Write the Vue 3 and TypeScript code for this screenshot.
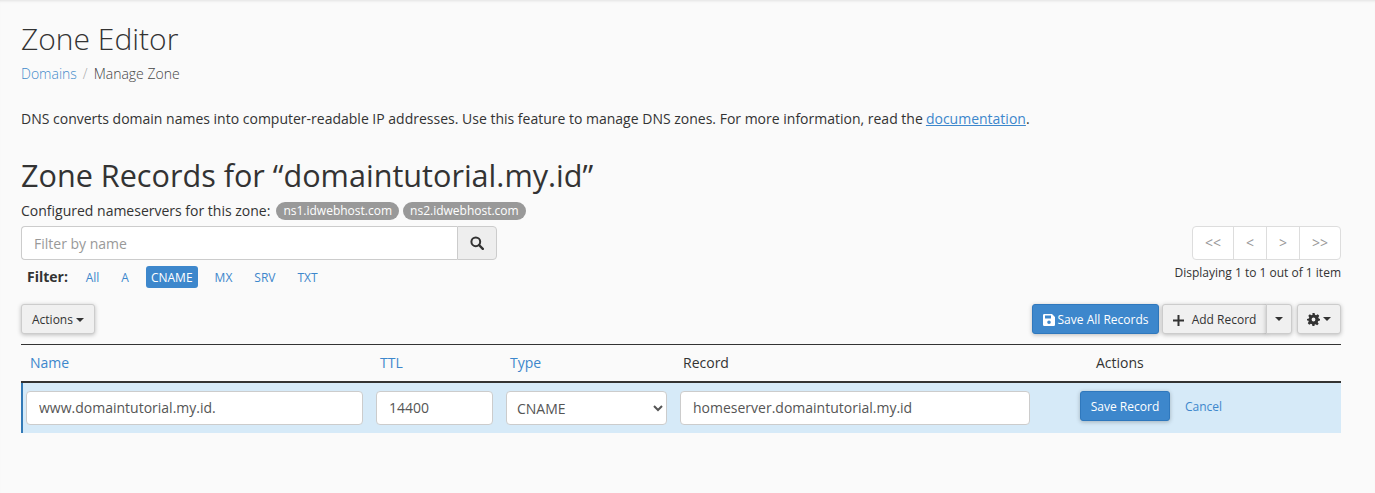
<script setup lang="ts">
import { ref } from 'vue'

const filters = ['All', 'A', 'CNAME', 'MX', 'SRV', 'TXT']
const activeFilter = ref('CNAME')
const pages = ['<<', '<', '>', '>>']

const record = ref({
  name: 'www.domaintutorial.my.id.',
  ttl: '14400',
  type: 'CNAME',
  value: 'homeserver.domaintutorial.my.id'
})
</script>

<template>
  <div class="page">
    <h1 class="title">Zone Editor</h1>
    <div class="crumbs">
      <a class="link">Domains</a><span class="sep">/</span><span class="current">Manage Zone</span>
    </div>
    <p class="intro">
      DNS converts domain names into computer-readable IP addresses. Use this feature to manage DNS zones. For more information, read the
      <a class="doc-link">documentation</a>.
    </p>
    <h2 class="zone-title">Zone Records for “domaintutorial.my.id”</h2>
    <div class="nameservers">
      <span>Configured nameservers for this zone:</span>
      <span class="ns-badge">ns1.idwebhost.com</span>
      <span class="ns-badge">ns2.idwebhost.com</span>
    </div>

    <div class="filter-row">
      <div class="filter-left">
        <div class="search">
          <input class="search-input" placeholder="Filter by name" />
          <button class="search-btn" aria-label="Search">
            <svg width="14" height="14" viewBox="0 0 14 14">
              <circle cx="5.8" cy="5.8" r="4.4" fill="none" stroke="#333" stroke-width="2" />
              <path d="M9 9l3.8 3.8" stroke="#333" stroke-width="2.4" stroke-linecap="round" />
            </svg>
          </button>
        </div>
        <div class="type-filter">
          <strong class="filter-label">Filter:</strong>
          <a
            v-for="f in filters"
            :key="f"
            class="pill"
            :class="{ active: f === activeFilter }"
            @click="activeFilter = f"
          >{{ f }}</a>
        </div>
      </div>
      <div class="paging">
        <div class="pager">
          <span v-for="p in pages" :key="p" class="page-cell">{{ p }}</span>
        </div>
        <div class="paging-text">Displaying 1 to 1 out of 1 item</div>
      </div>
    </div>

    <div class="toolbar">
      <button class="btn">Actions <span class="caret"></span></button>
      <div class="toolbar-right">
        <button class="btn btn-primary save-all">
          <svg width="12" height="12" viewBox="0 0 12 12">
            <path fill="#fff" fill-rule="evenodd" d="M1.2 0H9l3 3v7.8A1.2 1.2 0 0 1 10.8 12H1.2A1.2 1.2 0 0 1 0 10.800V1.200A1.200 1.200 0 0 1 1.200 0zM2 1.500V4.500H8V1.500zM6 6.500A1.800 1.800 0 1 0 6 10.100 1.800 1.800 0 0 0 6 6.500z" />
          </svg>
          Save All Records
        </button>
        <div class="split">
          <button class="btn add-btn">
            <svg width="11" height="11" viewBox="0 0 11 11">
              <path d="M5.500 0v11M0 5.500h11" stroke="#333" stroke-width="2" />
            </svg>
            Add Record
          </button>
          <button class="btn add-caret"><span class="caret"></span></button>
        </div>
        <button class="btn gear-btn" aria-label="Settings">
          <svg width="13" height="13" viewBox="0 0 24 24">
            <path fill="#333" fill-rule="evenodd" d="M10 0h4l.7 3.300 2.200.9L19.800 2.400l2.800 2.800-1.800 2.900.9 2.200L24 11v3l-3.300.7-.9 2.200 1.800 2.900-2.800 2.800-2.900-1.800-2.200.9L14 24h-4l-.7-3.300-2.200-.9-2.900 1.800-2.800-2.800 1.800-2.900-.9-2.200L0 14v-3l3.300-.7.9-2.200-1.800-2.900L5.200 2.400l2.900 1.800 2.200-.9zM12 8.500a3.500 3.500 0 1 0 0 7 3.500 3.500 0 0 0 0-7z" />
          </svg>
          <span class="caret"></span>
        </button>
      </div>
    </div>

    <table class="records">
      <colgroup>
        <col class="col-name" />
        <col class="col-ttl" />
        <col class="col-type" />
        <col class="col-record" />
        <col />
      </colgroup>
      <thead>
        <tr>
          <th><a class="link">Name</a></th>
          <th><a class="link">TTL</a></th>
          <th><a class="link">Type</a></th>
          <th>Record</th>
          <th class="actions-head">Actions</th>
        </tr>
      </thead>
      <tbody>
        <tr class="edit-row">
          <td class="first"><input v-model="record.name" class="field narrow" /></td>
          <td><input v-model="record.ttl" class="field narrow" /></td>
          <td>
            <select v-model="record.type" class="field select narrow">
              <option>A</option>
              <option>CNAME</option>
              <option>MX</option>
              <option>SRV</option>
              <option>TXT</option>
            </select>
          </td>
          <td><input v-model="record.value" class="field" /></td>
          <td>
            <div class="row-actions">
              <button class="btn btn-primary save-one">Save Record</button>
              <a class="link cancel">Cancel</a>
            </div>
          </td>
        </tr>
      </tbody>
    </table>
  </div>
</template>

<style>
html, body { margin: 0; background: #fafafa; }
</style>

<style scoped>
.page { box-sizing: border-box; width: 1375px; height: 493px; overflow: hidden; padding: 0 34px 0 21px; background: #fafafa; box-shadow: inset 0 3px 3px -2px rgba(0,0,0,0.1); font-family: "Open Sans", "Noto Sans", sans-serif; font-size: 14px; line-height: 20px; color: #333; }
.title { margin: 0; padding-top: 20px; font-size: 30px; line-height: 38px; font-weight: 300; }
.crumbs { margin-top: 6px; height: 20px; display: flex; font-weight: 300; }
.link { color: #3d87cc; cursor: pointer; }
.crumbs .link { color: #428bca; }
.sep { color: #aaa; padding: 0 6px; }
.current { color: #444; }
.intro { margin: 25px 0 0; }
.doc-link { color: #3d87cc; text-decoration: underline; margin-left: -0.5px; }
.zone-title { margin: 26px 0 0; font-size: 30.6px; line-height: 40px; font-weight: 400; color: #333; }
.nameservers { margin-top: 5px; display: flex; align-items: center; gap: 4px; font-size: 14px; height: 20px; padding-top: 1px; box-sizing: border-box; }
.ns-badge { background: #999; color: #fff; border-radius: 10px; padding: 0 7px; font-size: 12px; line-height: 18px; margin-left: 2px; }
.ns-badge + .ns-badge { margin-left: 0; }
.filter-row { margin-top: 6px; display: flex; justify-content: space-between; }
.search { display: flex; width: 476px; height: 34px; box-sizing: border-box; }
.search-input { flex: 1; min-width: 0; box-sizing: border-box; border: 1px solid #ccc; border-right: 0; border-radius: 4px 0 0 4px; background: #fff; padding: 2px 12px 0; font: inherit; color: #555; outline: none; }
.search-input::placeholder { color: #999; opacity: 1; }
.search-btn { width: 40px; border: 1px solid #ccc; border-radius: 0 4px 4px 0; background: #eee; display: flex; align-items: center; justify-content: center; padding: 0; }
.type-filter { margin-top: 6px; display: flex; align-items: center; height: 22px; font-size: 12px; }
.filter-label { font-size: 14px; font-weight: 700; margin: 0 12.5px 0 6px; color: #333; }
.pill { padding: 1px 5.25px 0; line-height: 21px; margin-right: 11.5px; border-radius: 3px; color: #3d87cc; cursor: pointer; }
.pill.active { background: #3d87cc; color: #fff; }
.paging { display: flex; flex-direction: column; align-items: flex-end; }
.pager { display: flex; height: 34px; box-sizing: border-box; border: 1px solid #ddd; border-radius: 4px; background: #fff; }
.page-cell { width: 32px; text-align: center; line-height: 32px; font-size: 14px; color: #999; border-left: 1px solid #ddd; }
.page-cell:first-child { border-left: 0; width: 40px; }
.page-cell:last-child { width: 40px; }
.paging-text { margin-top: 3px; font-size: 12px; line-height: 20px; color: #333; }
.toolbar { margin-top: 16px; display: flex; justify-content: space-between; height: 30px; }
.toolbar-right { display: flex; gap: 3px; }
.btn { box-sizing: border-box; height: 30px; padding: 2px 10px 0; border: 1px solid #ccc; border-radius: 3px; background: #f0f0f0; color: #333; font: inherit; font-size: 12px; line-height: 18px; box-shadow: 0 1px 4px rgba(0,0,0,0.25); display: inline-flex; align-items: center; gap: 3px; cursor: pointer; white-space: nowrap; }
.btn-primary { background: #3d87cc; border-color: #2f78bd; color: #fff; }
.caret { display: inline-block; width: 0; height: 0; border-top: 4px solid #333; border-left: 4px solid transparent; border-right: 4px solid transparent; }
.save-all { width: 127px; justify-content: center; padding: 2px 0 0; }
.split { display: flex; }
.add-btn { width: 105px; gap: 8px; border-radius: 3px 0 0 3px; justify-content: center; padding: 2px 0 0; }
.add-caret { width: 26px; margin-left: -1px; border-radius: 0 3px 3px 0; justify-content: center; padding: 0; }
.gear-btn { width: 44px; margin-left: 2px; justify-content: center; padding: 0; }
.records { margin-top: 10px; width: 1320px; table-layout: fixed; border-collapse: separate; border-spacing: 0; border-top: 1px solid #333; }
.col-name { width: 350px; }
.col-ttl { width: 130px; }
.col-type { width: 174px; }
.col-record { width: 360px; }
.records th { height: 38px; padding: 0 9px 1px; text-align: left; font-weight: 400; font-size: 14px; border-bottom: 2px solid #333; color: #333; box-sizing: border-box; }
.records th:nth-child(4) { padding-left: 8px; }
.records th.actions-head { padding-left: 61px; }
.edit-row td { background: #d6eaf8; padding: 8px 5px 7px; height: 50px; box-sizing: border-box; vertical-align: top; }
.edit-row td.first { border-left: 2px solid #337ab7; padding-left: 3px; }
.field { display: block; box-sizing: border-box; width: 100%; height: 34px; padding: 0 12px 2px; border: 1px solid #ccc; border-radius: 4px; background: #fff; font: inherit; color: #555; outline: none; }
.narrow { width: calc(100% - 3px); }
.select { padding: 0 0 0 6px; }
.row-actions { display: flex; align-items: center; gap: 15px; padding-left: 40px; }
.save-one { width: 90px; justify-content: center; padding: 2px 0 0; }
.cancel { font-size: 12px; padding-top: 2px; }
</style>
